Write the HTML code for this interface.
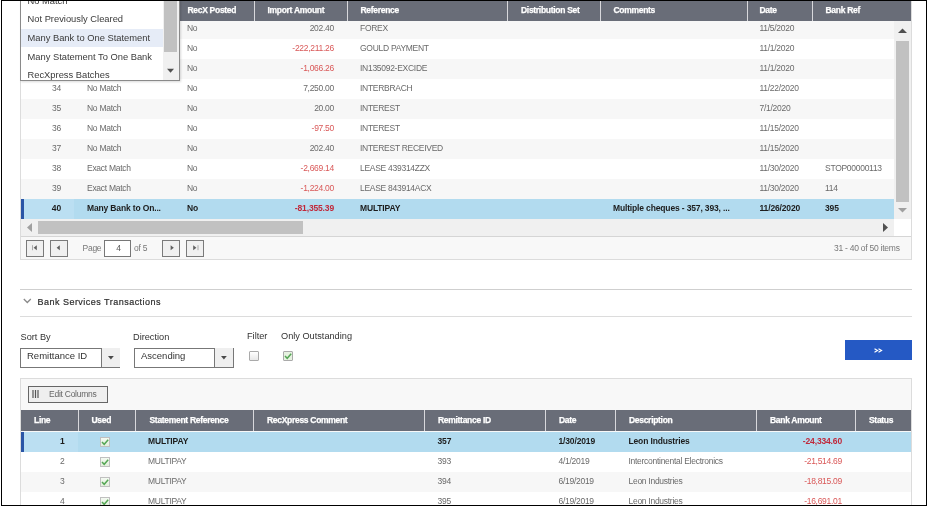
<!DOCTYPE html><html><head><meta charset="utf-8"><style>
*{box-sizing:border-box;margin:0;padding:0}
html,body{width:927px;height:507px;overflow:hidden;background:#fff;font-family:"Liberation Sans",sans-serif;}
.a{position:absolute}
.t{position:absolute;white-space:nowrap}
.hdr{position:absolute;background:#696d78;color:#fff;font-weight:bold;font-size:8.5px;letter-spacing:-.3px;-webkit-text-stroke:.25px #fff}
.hdr span{position:absolute;top:-0.5px;line-height:21px;white-space:nowrap}
.vd{position:absolute;top:0;width:1px;height:21px;background:#d8d8dc}
.row{position:absolute;background:#fff;height:20px;font-size:8.5px;letter-spacing:-.28px;color:#6a6a6a;white-space:nowrap;overflow:hidden}
.row span{position:absolute;line-height:20px;top:-1px}
.odd{background:#f7f7f7}
.sel{background:#b2dbef;color:#1c1c1c;font-weight:bold;letter-spacing:-.15px}
.neg{color:#d95858}
.sel .neg{color:#c0283a}
.r{text-align:right}
.pbtn{position:absolute;width:17.5px;height:17px;border:1px solid #7a7a7a;background:#f0f0f0}
</style></head><body><div style="position:absolute;left:0;top:0;width:927px;height:507px;will-change:transform;overflow:hidden">
<div class="a" style="left:20px;top:0;width:892px;height:260px;border:1px solid #dcdcdc;border-top:none;background:#fff"></div>
<div class="hdr" style="left:21px;top:0;width:890px;height:21px">
<div class="vd" style="left:153px"></div>
<div class="vd" style="left:233px"></div>
<div class="vd" style="left:326px"></div>
<div class="vd" style="left:486px"></div>
<div class="vd" style="left:579px"></div>
<div class="vd" style="left:726px"></div>
<div class="vd" style="left:791px"></div>
<span style="left:166.5px">RecX Posted</span>
<span style="left:246.5px">Import Amount</span>
<span style="left:339.5px">Reference</span>
<span style="left:500.0px">Distribution Set</span>
<span style="left:592.5px">Comments</span>
<span style="left:738.5px">Date</span>
<span style="left:804.5px">Bank Ref</span>
</div>
<div class="a" style="left:21px;top:21px;width:873px;height:198px;overflow:hidden">
<div class="row odd" style="left:0;top:-2px;width:873px">
<span class="r" style="left:0;width:40px">31</span>
<span style="left:66.0px">No Match</span>
<span style="left:166.0px">No</span>
<span class="r" style="left:213.0px;width:100px">202.40</span>
<span style="left:339.0px">FOREX</span>
<span style="left:738.5px">11/5/2020</span>
</div>
<div class="row" style="left:0;top:18px;width:873px">
<span class="r" style="left:0;width:40px">32</span>
<span style="left:66.0px">No Match</span>
<span style="left:166.0px">No</span>
<span class="r neg" style="left:213.0px;width:100px">-222,211.26</span>
<span style="left:339.0px">GOULD PAYMENT</span>
<span style="left:738.5px">11/1/2020</span>
</div>
<div class="row odd" style="left:0;top:38px;width:873px">
<span class="r" style="left:0;width:40px">33</span>
<span style="left:66.0px">No Match</span>
<span style="left:166.0px">No</span>
<span class="r neg" style="left:213.0px;width:100px">-1,066.26</span>
<span style="left:339.0px">IN135092-EXCIDE</span>
<span style="left:738.5px">11/1/2020</span>
</div>
<div class="row" style="left:0;top:58px;width:873px">
<span class="r" style="left:0;width:40px">34</span>
<span style="left:66.0px">No Match</span>
<span style="left:166.0px">No</span>
<span class="r" style="left:213.0px;width:100px">7,250.00</span>
<span style="left:339.0px">INTERBRACH</span>
<span style="left:738.5px">11/22/2020</span>
</div>
<div class="row odd" style="left:0;top:78px;width:873px">
<span class="r" style="left:0;width:40px">35</span>
<span style="left:66.0px">No Match</span>
<span style="left:166.0px">No</span>
<span class="r" style="left:213.0px;width:100px">20.00</span>
<span style="left:339.0px">INTEREST</span>
<span style="left:738.5px">7/1/2020</span>
</div>
<div class="row" style="left:0;top:98px;width:873px">
<span class="r" style="left:0;width:40px">36</span>
<span style="left:66.0px">No Match</span>
<span style="left:166.0px">No</span>
<span class="r neg" style="left:213.0px;width:100px">-97.50</span>
<span style="left:339.0px">INTEREST</span>
<span style="left:738.5px">11/15/2020</span>
</div>
<div class="row odd" style="left:0;top:118px;width:873px">
<span class="r" style="left:0;width:40px">37</span>
<span style="left:66.0px">No Match</span>
<span style="left:166.0px">No</span>
<span class="r" style="left:213.0px;width:100px">202.40</span>
<span style="left:339.0px">INTEREST RECEIVED</span>
<span style="left:738.5px">11/15/2020</span>
</div>
<div class="row" style="left:0;top:138px;width:873px">
<span class="r" style="left:0;width:40px">38</span>
<span style="left:66.0px">Exact Match</span>
<span style="left:166.0px">No</span>
<span class="r neg" style="left:213.0px;width:100px">-2,669.14</span>
<span style="left:339.0px">LEASE 439314ZZX</span>
<span style="left:738.5px">11/30/2020</span>
<span style="left:804.0px">STOP00000113</span>
</div>
<div class="row odd" style="left:0;top:158px;width:873px">
<span class="r" style="left:0;width:40px">39</span>
<span style="left:66.0px">Exact Match</span>
<span style="left:166.0px">No</span>
<span class="r neg" style="left:213.0px;width:100px">-1,224.00</span>
<span style="left:339.0px">LEASE 843914ACX</span>
<span style="left:738.5px">11/30/2020</span>
<span style="left:804.0px">114</span>
</div>
<div class="row sel" style="left:0;top:178px;width:873px">
<div class="a" style="left:0;top:0;width:53px;height:20px;background:#bbdff2"></div>
<div class="a" style="left:0;top:0;width:3px;height:20px;background:#2a55a6"></div>
<span class="r" style="left:0;width:40px">40</span>
<span style="left:66.0px">Many Bank to On...</span>
<span style="left:166.0px">No</span>
<span class="r neg" style="left:213.0px;width:100px">-81,355.39</span>
<span style="left:339.0px">MULTIPAY</span>
<span style="left:592.0px">Multiple cheques - 357, 393, ...</span>
<span style="left:738.5px">11/26/2020</span>
<span style="left:804.0px">395</span>
</div>
</div>
<div class="a" style="left:894px;top:21px;width:17px;height:198px;background:#f0f0f0"></div>
<div class="a" style="left:896px;top:41px;width:13px;height:161px;background:#c1c1c1"></div>
<svg class="a" style="left:894px;top:21px" width="17" height="17"><path d="M4 12 L8.5 7.5 L13 12 Z" fill="#505050"/></svg>
<svg class="a" style="left:894px;top:202px" width="17" height="17"><path d="M4 6 L8.5 10.5 L13 6 Z" fill="#a0a0a0"/></svg>
<div class="a" style="left:21px;top:219px;width:873px;height:17px;background:#f0f0f0"></div>
<div class="a" style="left:38px;top:221px;width:265px;height:13px;background:#c1c1c1"></div>
<svg class="a" style="left:21px;top:219px" width="17" height="17"><path d="M11 4 L6 8.5 L11 13 Z" fill="#a0a0a0"/></svg>
<svg class="a" style="left:877px;top:219px" width="17" height="17"><path d="M6 4 L11 8.5 L6 13 Z" fill="#505050"/></svg>
<div class="a" style="left:21px;top:236px;width:890px;height:23px;background:#f8f8f8;border-top:1px solid #d5d5d5"></div>
<div class="pbtn" style="left:26px;top:240px"></div>
<svg class="a" style="left:26px;top:240px" width="18" height="17"><rect x="6" y="5.2" width="1" height="5" fill="#aaa"/><path d="M7.6 7.7 L10.8 5.2 L10.8 10.2 Z" fill="#606060"/></svg>
<div class="pbtn" style="left:50px;top:240px"></div>
<svg class="a" style="left:50px;top:240px" width="18" height="17"><path d="M6.6 7.7 L9.8 5.2 L9.8 10.2 Z" fill="#606060"/></svg>
<div class="pbtn" style="left:162px;top:240px"></div>
<svg class="a" style="left:162px;top:240px" width="18" height="17"><path d="M8.6 5.2 L11.8 7.7 L8.6 10.2 Z" fill="#606060"/></svg>
<div class="pbtn" style="left:186px;top:240px"></div>
<svg class="a" style="left:186px;top:240px" width="18" height="17"><path d="M7.2 5.2 L10.4 7.7 L7.2 10.2 Z" fill="#606060"/><rect x="11.5" y="5.2" width="1" height="5" fill="#aaa"/></svg>
<div class="t" style="left:82.5px;top:240px;line-height:17px;font-size:8.5px;letter-spacing:-.25px;color:#777">Page</div>
<div class="a" style="left:104px;top:240px;width:27px;height:17px;border:1px solid #777;background:#fff;font-size:8.5px;color:#555;text-align:center;line-height:15px;padding-left:2px">4</div>
<div class="t" style="left:134px;top:240px;line-height:17px;font-size:8.5px;letter-spacing:-.25px;color:#777">of 5</div>
<div class="t" style="left:834px;top:240px;line-height:17px;font-size:8.5px;letter-spacing:-.25px;color:#777">31 - 40 of 50 items</div>
<div class="a" style="left:20px;top:0;width:160px;height:81px;background:#fff;border:1px solid #8a8a8a;border-top:none;box-shadow:1px 1px 2px rgba(0,0,0,.15)"></div>
<div class="a" style="left:21px;top:29px;width:142px;height:17.5px;background:#e6ecf7"></div>
<div class="t" style="left:21px;top:-8.5px;width:143px;height:19px;line-height:19px;font-size:9.35px;color:#3a3a3a;padding-left:6.5px">No Match</div>
<div class="t" style="left:21px;top:9.5px;width:143px;height:19px;line-height:19px;font-size:9.35px;color:#3a3a3a;padding-left:6.5px">Not Previously Cleared</div>
<div class="t" style="left:21px;top:28.5px;width:143px;height:19px;line-height:19px;font-size:9.35px;color:#3a3a3a;padding-left:6.5px">Many Bank to One Statement</div>
<div class="t" style="left:21px;top:48.0px;width:143px;height:19px;line-height:19px;font-size:9.35px;color:#3a3a3a;padding-left:6.5px">Many Statement To One Bank</div>
<div class="t" style="left:21px;top:66.0px;width:143px;height:19px;line-height:19px;font-size:9.35px;color:#3a3a3a;padding-left:6.5px">RecXpress Batches</div>
<div class="a" style="left:163px;top:0;width:16px;height:80px;background:#f0f0f0"></div>
<div class="a" style="left:164px;top:0;width:13px;height:52px;background:#c1c1c1"></div>
<svg class="a" style="left:163px;top:62px" width="15" height="15"><path d="M4 6.8 L7.5 10.8 L11 6.8 Z" fill="#505050"/></svg>
<div class="a" style="left:20px;top:289px;width:892px;height:1px;background:#cfcfcf"></div>
<div class="a" style="left:20px;top:316px;width:892px;height:1px;background:#dcdcdc"></div>
<svg class="a" style="left:22px;top:297px" width="11" height="8"><path d="M1.8 2 L5.3 5.5 L8.8 2" stroke="#8a8a8a" stroke-width="1.3" fill="none"/></svg>
<div class="t" style="left:37.5px;top:295px;line-height:14px;font-size:9px;letter-spacing:.48px;color:#2e2e2e;-webkit-text-stroke:.2px #2e2e2e">Bank Services Transactions</div>
<div class="t" style="left:20.5px;top:332px;line-height:11px;font-size:9.2px;color:#333">Sort By</div>
<div class="t" style="left:133px;top:332px;line-height:11px;font-size:9.2px;color:#333">Direction</div>
<div class="t" style="left:247px;top:331px;line-height:11px;font-size:9.2px;color:#333">Filter</div>
<div class="t" style="left:281px;top:331px;line-height:11px;font-size:9.2px;color:#333">Only Outstanding</div>
<div class="a" style="left:20px;top:348px;width:82px;height:20px;border:1px solid #777;background:#fff"></div>
<div class="a" style="left:102px;top:348px;width:18px;height:20px;background:#efefef;border-bottom:1px solid #777;border-right:none"></div>
<div class="t" style="left:27px;top:347px;line-height:17px;font-size:9.5px;color:#333">Remittance ID</div>
<svg class="a" style="left:107px;top:355px" width="8" height="6"><path d="M1 0.9 L3.9 4.4 L6.8 0.9 Z" fill="#4a4a4a"/></svg>
<div class="a" style="left:134px;top:348px;width:81px;height:20px;border:1px solid #777;background:#fff"></div>
<div class="a" style="left:215px;top:348px;width:19px;height:20px;background:#efefef;border-bottom:1px solid #777;border-right:1px solid #777"></div>
<div class="t" style="left:141px;top:347px;line-height:17px;font-size:9.5px;color:#333">Ascending</div>
<svg class="a" style="left:220px;top:355px" width="8" height="6"><path d="M1 0.9 L3.9 4.4 L6.8 0.9 Z" fill="#4a4a4a"/></svg>
<div class="a" style="left:249px;top:351px;width:10px;height:10px;border:1px solid #aaa;border-radius:1px;background:linear-gradient(#fff,#e8e8e8)"></div>
<div class="a" style="left:283px;top:351px;width:10px;height:10px;border:1px solid #aaa;border-radius:1px;background:#e6f2e0"></div>
<svg class="a" style="left:283px;top:351px" width="10" height="10"><path d="M2 5 L4.2 7.3 L8.2 2.8" stroke="#55a655" stroke-width="1.5" fill="none"/></svg>
<div class="a" style="left:845px;top:340px;width:67px;height:20px;background:#2559c4"></div>
<svg class="a" style="left:873px;top:347px" width="11" height="7"><path d="M1.5 1.8 L4.5 3.5 L1.5 5.2 M5.5 1.8 L8.5 3.5 L5.5 5.2" stroke="#fff" stroke-width="1.2" fill="none"/></svg>
<div class="a" style="left:20px;top:378px;width:892px;height:140px;border:1px solid #dcdcdc;background:#f8f8f8"></div>
<div class="a" style="left:28px;top:386px;width:80px;height:17px;border:1px solid #666;background:#efefef"></div>
<svg class="a" style="left:32px;top:390px" width="8" height="8"><path d="M1 0V8M3.5 0V8M6 0V8" stroke="#555" stroke-width="1.2"/></svg>
<div class="t" style="left:49px;top:386px;line-height:17px;font-size:8.5px;letter-spacing:-.25px;color:#666">Edit Columns</div>
<div class="hdr" style="left:21px;top:410px;width:890px;height:21px">
<div class="vd" style="left:57px"></div>
<div class="vd" style="left:114px"></div>
<div class="vd" style="left:232px"></div>
<div class="vd" style="left:403px"></div>
<div class="vd" style="left:524px"></div>
<div class="vd" style="left:594px"></div>
<div class="vd" style="left:735px"></div>
<div class="vd" style="left:834px"></div>
<span style="left:13.0px">Line</span>
<span style="left:70.5px">Used</span>
<span style="left:128.5px">Statement Reference</span>
<span style="left:246.0px">RecXpress Comment</span>
<span style="left:417.0px">Remittance ID</span>
<span style="left:538.0px">Date</span>
<span style="left:608.0px">Description</span>
<span style="left:749.0px">Bank Amount</span>
<span style="left:848.0px">Status</span>
</div>
<div class="row sel" style="left:21px;top:432px;width:890px;background-color:">
<div class="a" style="left:0;top:0;width:57px;height:20px;background:#bbdff2"></div>
<div class="a" style="left:0;top:0;width:3px;height:20px;background:#2a55a6"></div>
<span class="r" style="left:0;width:43.5px">1</span>
<div class="a" style="left:79px;top:5px;width:10px;height:10px;border:1px solid #c0c0c0;background:linear-gradient(#f4faf2,#e2efdc)"></div>
<svg class="a" style="left:79px;top:5px" width="10" height="10"><path d="M2 5 L4.2 7.3 L8.2 2.8" stroke="#55a655" stroke-width="1.5" fill="none"/></svg>
<span style="left:127.0px">MULTIPAY</span>
<span style="left:416.5px">357</span>
<span style="left:537.5px">1/30/2019</span>
<span style="left:607.5px">Leon Industries</span>
<span class="r neg" style="left:721.0px;width:100px">-24,334.60</span>
</div>
<div class="row" style="left:21px;top:452px;width:890px;background-color:">
<span class="r" style="left:0;width:43.5px">2</span>
<div class="a" style="left:79px;top:5px;width:10px;height:10px;border:1px solid #c0c0c0;background:linear-gradient(#f4faf2,#e2efdc)"></div>
<svg class="a" style="left:79px;top:5px" width="10" height="10"><path d="M2 5 L4.2 7.3 L8.2 2.8" stroke="#55a655" stroke-width="1.5" fill="none"/></svg>
<span style="left:127.0px">MULTIPAY</span>
<span style="left:416.5px">393</span>
<span style="left:537.5px">4/1/2019</span>
<span style="left:607.5px">Intercontinental Electronics</span>
<span class="r neg" style="left:721.0px;width:100px">-21,514.69</span>
</div>
<div class="row odd" style="left:21px;top:472px;width:890px;background-color:">
<span class="r" style="left:0;width:43.5px">3</span>
<div class="a" style="left:79px;top:5px;width:10px;height:10px;border:1px solid #c0c0c0;background:linear-gradient(#f4faf2,#e2efdc)"></div>
<svg class="a" style="left:79px;top:5px" width="10" height="10"><path d="M2 5 L4.2 7.3 L8.2 2.8" stroke="#55a655" stroke-width="1.5" fill="none"/></svg>
<span style="left:127.0px">MULTIPAY</span>
<span style="left:416.5px">394</span>
<span style="left:537.5px">6/19/2019</span>
<span style="left:607.5px">Leon Industries</span>
<span class="r neg" style="left:721.0px;width:100px">-18,815.09</span>
</div>
<div class="row" style="left:21px;top:492px;width:890px;background-color:">
<span class="r" style="left:0;width:43.5px">4</span>
<div class="a" style="left:79px;top:5px;width:10px;height:10px;border:1px solid #c0c0c0;background:linear-gradient(#f4faf2,#e2efdc)"></div>
<svg class="a" style="left:79px;top:5px" width="10" height="10"><path d="M2 5 L4.2 7.3 L8.2 2.8" stroke="#55a655" stroke-width="1.5" fill="none"/></svg>
<span style="left:127.0px">MULTIPAY</span>
<span style="left:416.5px">395</span>
<span style="left:537.5px">6/19/2019</span>
<span style="left:607.5px">Leon Industries</span>
<span class="r neg" style="left:721.0px;width:100px">-16,691.01</span>
</div>
<div class="a" style="left:1px;top:0;width:926px;height:506px;border:1px solid #000"></div>
<div class="a" style="left:0;top:506px;width:927px;height:1px;background:#fff"></div>
</div></body></html>
